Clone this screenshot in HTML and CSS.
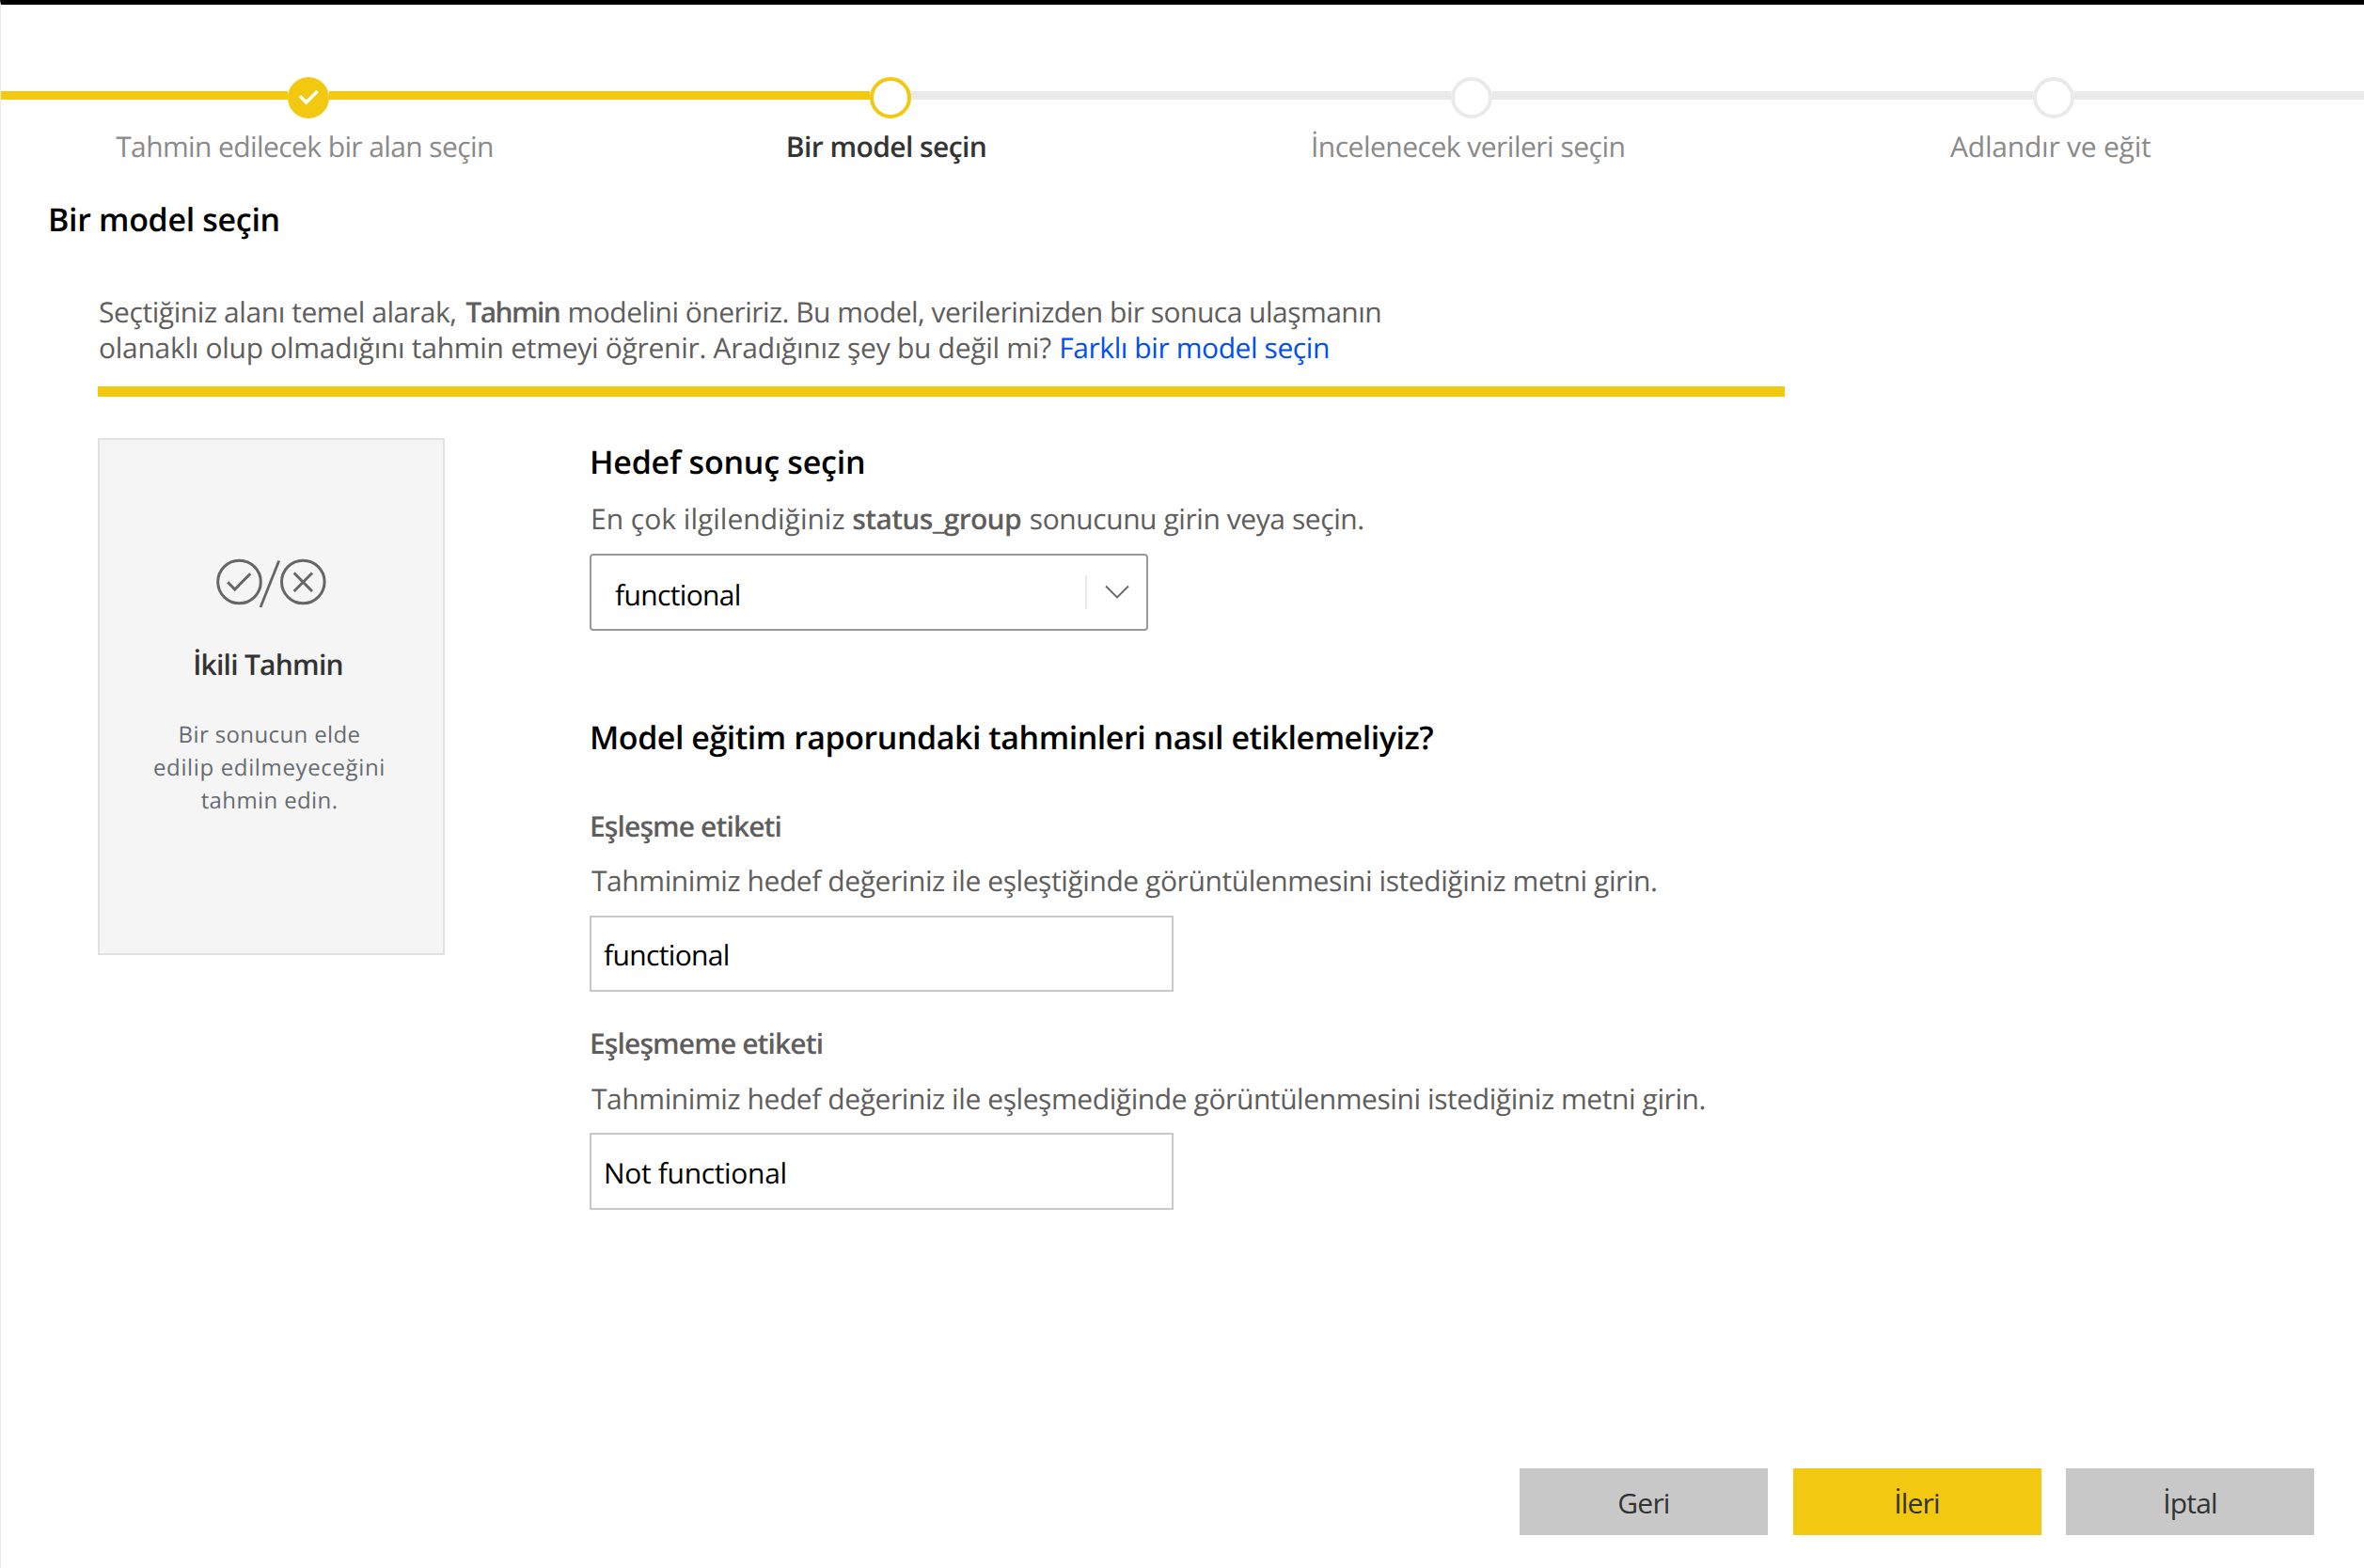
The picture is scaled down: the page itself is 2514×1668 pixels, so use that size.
FILE: index.html
```
<!DOCTYPE html>
<html lang="tr">
<head>
<meta charset="utf-8">
<title>Bir model seçin</title>
<link rel="stylesheet" href="styles.css">
</head>
<body>
<nav class="stepper">
  <div class="track">
    <span class="segment segment-first done"></span>
    <span class="dot dot-done"><svg width="44" height="44" viewBox="0 0 44 44"><path d="M13 20.2 L19.7 27 L31.5 15" fill="none" stroke="#fff" stroke-width="3.4"/></svg></span>
    <span class="segment done"></span>
    <span class="dot dot-current"></span>
    <span class="segment segment-short"></span>
    <span class="dot"></span>
    <span class="segment segment-short"></span>
    <span class="dot"></span>
    <span class="segment segment-last"></span>
  </div>
  <div class="labels">
    <span class="label label-pick">Tahmin edilecek bir alan seçin</span>
    <span class="label label-current">Bir model seçin</span>
    <span class="label label-data">İncelenecek verileri seçin</span>
    <span class="label label-name">Adlandır ve eğit</span>
  </div>
</nav>
<main class="page">
  <h1 class="title">Bir model seçin</h1>
  <section class="body">
    <p class="intro">Seçtiğiniz alanı temel alarak, <b class="model-name">Tahmin</b> <span class="intro-rest">modelini öneririz. Bu model, verilerinizden bir sonuca ulaşmanın</span><br><span class="intro-second">olanaklı olup olmadığını tahmin etmeyi öğrenir. Aradığınız şey bu değil mi?</span> <a class="link">Farklı bir model seçin</a></p>
    <div class="rule"></div>
    <div class="columns">
      <aside class="card">
        <svg class="card-icon" width="118" height="54" viewBox="0 0 118 54" fill="none" stroke="#666" stroke-width="3">
          <circle cx="24.5" cy="25" r="22.8"/>
          <circle cx="92.3" cy="25" r="22.8"/>
          <path d="M12.2 25.2 L19.8 33 L36.3 16.2M82.7 15.5 L102 35M102 15.5 L82.7 35"/>
          <path d="M66.7 2.5 L47 52" stroke-width="2.8"/>
        </svg>
        <h2 class="card-title">İkili Tahmin</h2>
        <p class="card-text"><span class="card-line">Bir sonucun elde</span><br>edilip edilmeyeceğini<br><span class="card-line">tahmin edin.</span></p>
      </aside>
      <div class="form">
        <h2 class="heading heading-target">Hedef sonuç seçin</h2>
        <p class="hint hint-target">En çok ilgilendiğiniz <b class="field-name">status_group</b> <span class="hint-rest">sonucunu girin veya seçin.</span></p>
        <div class="select"><span class="value">functional</span><span class="select-arrow"><svg width="28" height="16" viewBox="0 0 28 16"><path d="M2 1.5 L14 13.5 L26 1.5" fill="none" stroke="#666" stroke-width="1.8"/></svg></span></div>
        <h2 class="heading heading-labels">Model eğitim raporundaki tahminleri nasıl etiklemeliyiz?</h2>
        <h3 class="field-title">Eşleşme etiketi</h3>
        <p class="hint hint-match">Tahminimiz hedef değeriniz ile eşleştiğinde görüntülenmesini istediğiniz metni girin.</p>
        <div class="input input-match"><span class="value">functional</span></div>
        <h3 class="field-title field-title-second">Eşleşmeme etiketi</h3>
        <p class="hint hint-mismatch">Tahminimiz hedef değeriniz ile eşleşmediğinde görüntülenmesini istediğiniz metni girin.</p>
        <div class="input input-mismatch"><span class="value value-long">Not functional</span></div>
      </div>
    </div>
  </section>
</main>
<footer class="actions">
  <button class="button">Geri</button>
  <button class="button button-primary">İleri</button>
  <button class="button">İptal</button>
</footer>
</body>
</html>
```
FILE: styles.css
```
* { box-sizing: border-box; }

body {
  margin: 0;
  height: 1668px;
  display: flex;
  flex-direction: column;
  border-top: 5px solid #000;
  border-left: 1px solid #eaeaea;
  background: #fff;
  color: #000;
  font: 400 30px/38px "Open Sans", "Noto Sans", sans-serif;
  letter-spacing: -0.42px;
  text-rendering: geometricPrecision;
}

h1, h2, h3, p { margin: 0; }

.stepper { padding-top: 77px; }
.track { display: flex; height: 44px; margin-left: -1px; }
.segment { flex: 0 0 575px; height: 9px; margin-top: 15px; background: #eaeaea; }
.segment-first { flex-basis: 306px; }
.segment-short { flex-basis: 574.4px; }
.segment-last { flex: 1 1 0; }
.done { background: #f2c811; }
.dot { flex: 0 0 44px; height: 44px; border: 4px solid #eaeaea; border-radius: 50%; }
.dot-current { border-color: #f2c811; }
.dot-done { border: 0; background: #f2c811; }
.dot svg { display: block; }

.labels {
  display: grid;
  grid-template-columns: repeat(4, 618.6px);
  padding-left: 13.7px;
  margin-top: 11px;
  text-align: center;
  color: #8a8a8a;
}
.label-pick { letter-spacing: -0.6px; }
.label-current { font-weight: 600; color: #333; letter-spacing: -0.58px; }
.label-data { letter-spacing: -0.51px; }
.label-name { padding-left: 2px; letter-spacing: -0.22px; }

.title { margin: 36px 0 0 50px; font-size: 34px; line-height: 44px; font-weight: 600; letter-spacing: -0.33px; }

.body { padding: 58px 0 0 103px; }
.intro { padding-left: 1px; color: #605e5c; white-space: nowrap; }
.intro b, .hint b { font-weight: 600; }
.model-name { margin-left: 2.4px; letter-spacing: -1.6px; }
.intro-rest { margin-left: 1px; letter-spacing: -0.53px; }
.intro-second { letter-spacing: -0.28px; }
.link { margin-left: 1px; color: #004ff5; }
.rule { width: 1794px; height: 11px; margin-top: 22px; background: #f2c811; }

.columns { display: flex; gap: 154px; margin-top: 44px; }

.card {
  width: 369px;
  height: 550px;
  padding: 126px 4px 0 0;
  border: 2px solid #e1e1e1;
  background: #f5f5f5;
  text-align: center;
}
.card-icon { display: block; margin: 0 auto; position: relative; left: 2px; }
.card-title { margin-top: 40px; padding-right: 3px; font-size: 30px; line-height: 38px; font-weight: 600; letter-spacing: -0.75px; color: #333; }
.card-text { margin-top: 38px; font-size: 24px; line-height: 35px; letter-spacing: 0.64px; color: #666b70; }
.card-line { letter-spacing: 0.38px; }

.form { padding-top: 3px; white-space: nowrap; }
.heading { font-size: 34px; line-height: 44px; font-weight: 600; letter-spacing: -0.47px; }
.heading-target { letter-spacing: -0.24px; }
.heading-labels { margin-top: 91px; }
.hint { color: #605e5c; }
.hint-target { padding-left: 1px; margin-top: 20px; letter-spacing: 0; }
.field-name { letter-spacing: -0.67px; }
.hint-rest { margin-left: 1px; letter-spacing: -0.43px; }
.hint-match { padding-left: 2px; margin-top: 20px; }
.hint-mismatch { padding-left: 2px; margin-top: 21px; }
.field-title { margin-top: 54px; font-size: 30px; font-weight: 600; letter-spacing: -0.9px; color: #605e5c; }
.field-title-second { margin-top: 36px; }
.value { letter-spacing: -0.65px; }
.value-long { letter-spacing: -0.33px; }

.select {
  display: flex;
  align-items: center;
  justify-content: space-between;
  width: 594px;
  height: 82px;
  margin-top: 18px;
  padding: 5px 17px 0 25px;
  border: 2px solid #999;
  border-radius: 4px;
}
.select-arrow {
  display: flex;
  align-items: center;
  height: 36px;
  padding-left: 18px;
  border-left: 2px solid #eaeaea;
  margin-top: -5px;
}

.input {
  display: flex;
  align-items: center;
  width: 621px;
  height: 81px;
  margin-top: 18px;
  padding: 3px 13px 0;
  border: 2px solid #c8c8c8;
}
.input-mismatch { height: 82px; margin-top: 17px; }

.actions { display: flex; gap: 26.5px; justify-content: flex-end; margin-top: auto; padding: 0 53px 35px 0; }
.button {
  width: 264px;
  height: 71px;
  padding: 3px 0 0;
  border: 0;
  background: #c8c8c8;
  color: #333;
  font: inherit;
  letter-spacing: -0.8px;
}
.button-primary { background: #f2c811; }
```
